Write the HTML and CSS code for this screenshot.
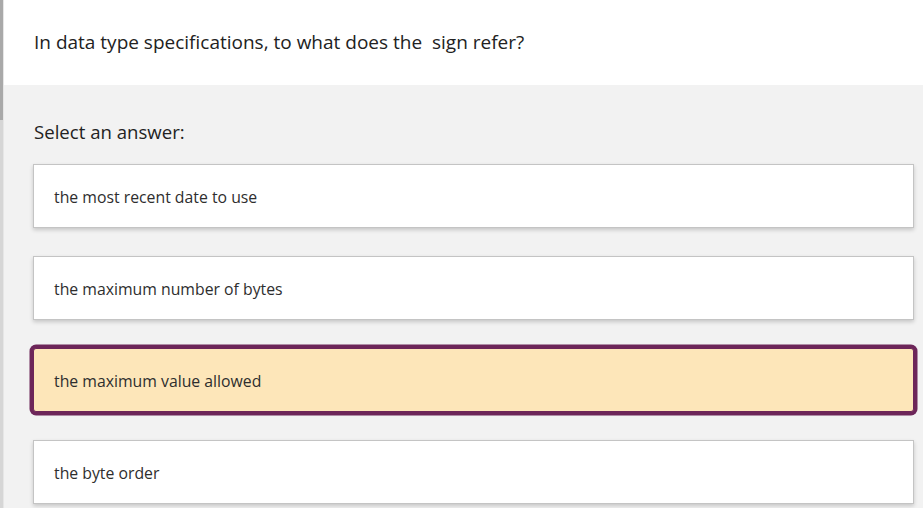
FILE: index.html
```html
<!DOCTYPE html>
<html lang="en">
<head>
<meta charset="utf-8">
<title>Question</title>
<link rel="stylesheet" href="styles.css">
</head>
<body>
<div class="page">
  <div class="scrollbar"><div class="thumb"></div></div>
  <main class="main">
    <header class="question">
      <h1 class="question-text">In data type specifications, to what does the &nbsp;sign refer?</h1>
    </header>
    <section class="answers">
      <p class="prompt">Select an answer:</p>
      <ul class="options">
        <li class="option">the most recent date to use</li>
        <li class="option">the maximum number of bytes</li>
        <li class="option option-selected">the maximum value allowed</li>
        <li class="option">the byte order</li>
      </ul>
    </section>
  </main>
</div>
</body>
</html>
```
FILE: styles.css
```css
html, body {
  margin: 0;
  padding: 0;
  height: 100%;
}
body {
  font-family: "Open Sans", "Noto Sans", sans-serif;
  background: #f2f2f2;
  color: #2b2b2b;
  overflow: hidden;
}
.page {
  display: flex;
  min-height: 100%;
}
.scrollbar {
  width: 3px;
  flex: 0 0 3px;
  background: #d6d6d6;
  border-right: 1px solid #e6e6e6;
}
.thumb {
  height: 120px;
  background: #a9a9a9;
}
.main {
  flex: 1;
  display: flex;
  flex-direction: column;
}
.question {
  background: #ffffff;
  height: 85px;
  box-sizing: border-box;
  display: flex;
  align-items: center;
  padding: 0 0 2px 30px;
}
.question-text {
  margin: 0;
  font-size: 19px;
  font-weight: 400;
  color: #222222;
  white-space: pre;
}
.answers {
  padding: 0 9px 0 29px;
}
.prompt {
  margin: 0;
  height: 79px;
  display: flex;
  align-items: center;
  font-size: 18.6px;
  color: #222222;
  padding: 14px 0 0 1px;
  box-sizing: border-box;
}
.options {
  list-style: none;
  margin: 0;
  padding: 0;
  display: flex;
  flex-direction: column;
  gap: 28px;
}
.option {
  height: 64px;
  box-sizing: border-box;
  background: #ffffff;
  border: 1px solid #c4c4c4;
  box-shadow: 0 2px 4px rgba(0, 0, 0, 0.18);
  display: flex;
  align-items: center;
  padding: 2px 0 0 20px;
  font-size: 15.8px;
  color: #2e2e2e;
}
.option-selected {
  background: #fde6b9;
  border: 1px solid #6d2659;
  border-radius: 3px;
  box-shadow: 0 0 0 3.5px #6d2659;
}
```
